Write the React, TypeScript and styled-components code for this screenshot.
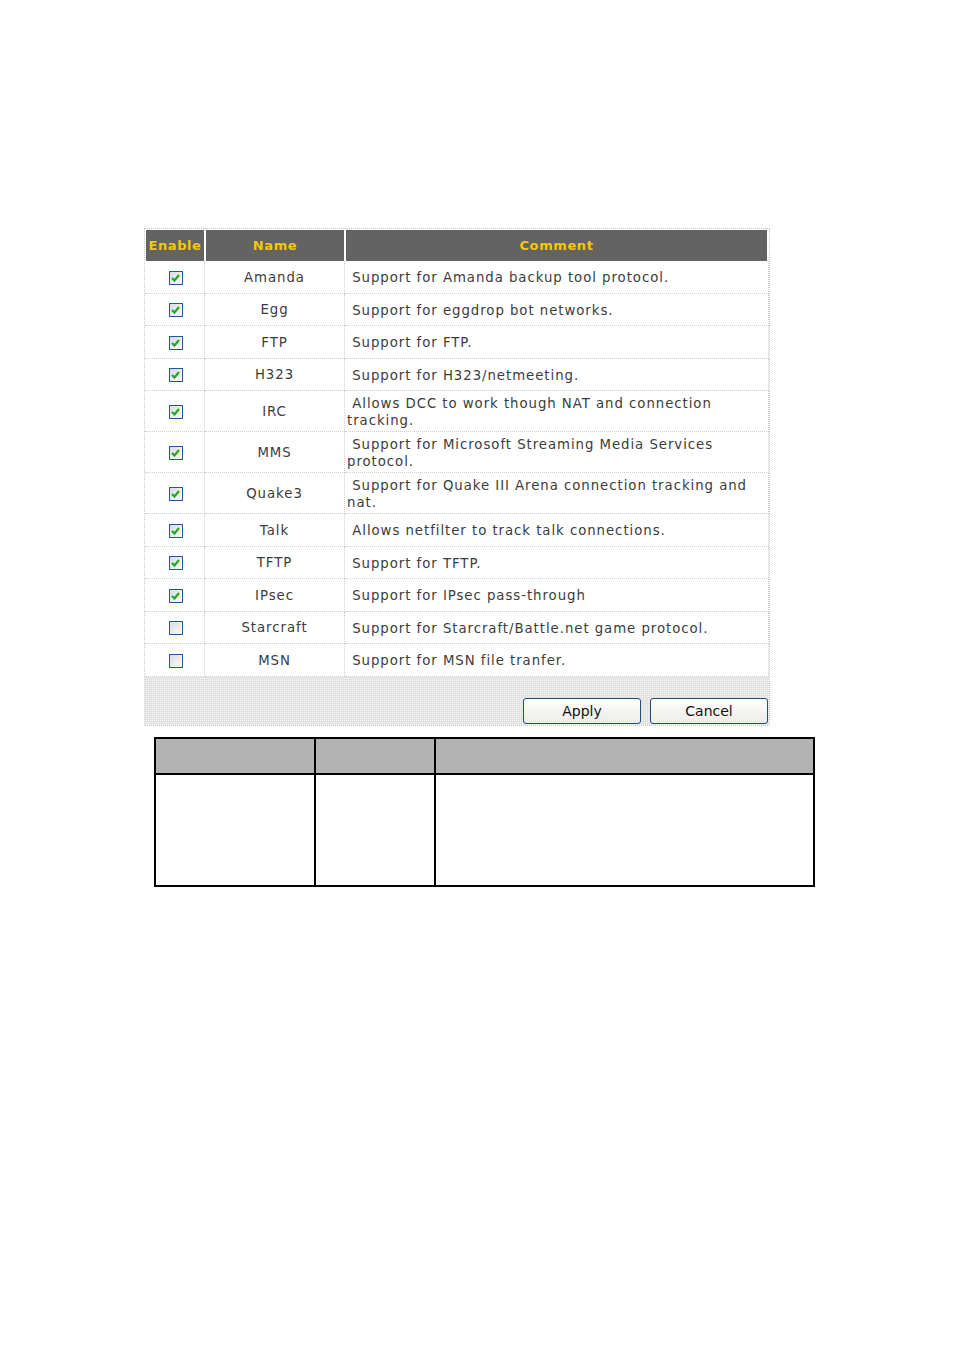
import { ReactElement } from 'react'
import styled, { createGlobalStyle } from 'styled-components'

const GlobalStyle = createGlobalStyle`
  body {
    margin: 0;
    background: #fff;
    font-family: 'DejaVu Sans', Verdana, sans-serif;
  }
`

type Alg = { name: string; comment: string; on: boolean; tall?: boolean }

const algs: Alg[] = [
  { name: 'Amanda', comment: 'Support for Amanda backup tool protocol.', on: true },
  { name: 'Egg', comment: 'Support for eggdrop bot networks.', on: true },
  { name: 'FTP', comment: 'Support for FTP.', on: true },
  { name: 'H323', comment: 'Support for H323/netmeeting.', on: true },
  { name: 'IRC', comment: 'Allows DCC to work though NAT and connection tracking.', on: true, tall: true },
  { name: 'MMS', comment: 'Support for Microsoft Streaming Media Services protocol.', on: true, tall: true },
  { name: 'Quake3', comment: 'Support for Quake III Arena connection tracking and nat.', on: true, tall: true },
  { name: 'Talk', comment: 'Allows netfilter to track talk connections.', on: true },
  { name: 'TFTP', comment: 'Support for TFTP.', on: true },
  { name: 'IPsec', comment: 'Support for IPsec pass-through', on: true },
  { name: 'Starcraft', comment: 'Support for Starcraft/Battle.net game protocol.', on: false },
  { name: 'MSN', comment: 'Support for MSN file tranfer.', on: false },
]

function CheckBox({ on }: { on: boolean }): ReactElement {
  return (
    <Box>
      {on && (
        <svg width="9" height="8" viewBox="0 0 9 8">
          <path d="M1 4 L3.5 6.5 L8 1" fill="none" stroke="#21a821" strokeWidth="2.2" />
        </svg>
      )}
    </Box>
  )
}

function App(): ReactElement {
  return (
    <Page>
      <GlobalStyle />
      <Panel>
        <AlgTable>
          <colgroup>
            <col style={{ width: 60 }} />
            <col style={{ width: 140 }} />
            <col />
          </colgroup>
          <thead>
            <tr>
              <Head>Enable</Head>
              <Head>Name</Head>
              <Head>Comment</Head>
            </tr>
          </thead>
          <tbody>
            {algs.map((a) => (
              <Row key={a.name} $tall={a.tall}>
                <Cell $center>
                  <CheckBox on={a.on} />
                </Cell>
                <Cell $center>{a.name}</Cell>
                <CommentCell>&nbsp;{a.comment}</CommentCell>
              </Row>
            ))}
          </tbody>
        </AlgTable>
        <Footer>
          <Button type="button">Apply</Button>
          <Button type="button">Cancel</Button>
        </Footer>
      </Panel>
      <BlankTable>
        <thead>
          <tr>
            <BlankHead style={{ width: 158 }} />
            <BlankHead style={{ width: 118 }} />
            <BlankHead />
          </tr>
        </thead>
        <tbody>
          <tr>
            <BlankCell />
            <BlankCell />
            <BlankCell />
          </tr>
        </tbody>
      </BlankTable>
    </Page>
  )
}

export default App

const Page = styled.div`
  padding: 228px 0 0 144px;
  min-height: 1350px;
  box-sizing: border-box;
`

const Panel = styled.div`
  width: 626px;
  box-sizing: border-box;
  border: 1px dotted #c8c8c8;
`

const AlgTable = styled.table`
  width: 100%;
  border-collapse: separate;
  border-spacing: 0;
  table-layout: fixed;
`

const Head = styled.th`
  height: 31px;
  padding: 0;
  background: #636363;
  border: 1px solid #fff;
  border-bottom: none;
  color: #f5c800;
  font-size: 13px;
  font-weight: bold;
  letter-spacing: 0.6px;
  text-align: center;
  &:last-child {
    border-right: 2px solid #fff;
  }
`

const Row = styled.tr<{ $tall?: boolean }>`
  height: ${(p) => (p.$tall ? '41px' : '32.5px')};
`

const Cell = styled.td<{ $center?: boolean }>`
  padding: 1px 2px 0;
  border-right: 1px dotted #cfcfcf;
  border-bottom: 1px dotted #cfcfcf;
  color: #3c3c3c;
  font-size: 13.3px;
  letter-spacing: 0.95px;
  line-height: 17px;
  text-align: ${(p) => (p.$center ? 'center' : 'left')};
  vertical-align: middle;
`

const CommentCell = styled(Cell)`
  padding: 2px 6px 0 2px;
`

const Box = styled.span`
  display: inline-flex;
  align-items: center;
  justify-content: center;
  width: 12px;
  height: 12px;
  margin-left: 2px;
  border: 1.5px solid #1c5a9a;
  background: linear-gradient(135deg, #dcdcd8, #fbfbfb);
  vertical-align: middle;
`

const Footer = styled.div`
  height: 48px;
  display: flex;
  justify-content: flex-end;
  align-items: flex-end;
  gap: 9px;
  padding: 0 1px 0 0;
  box-sizing: border-box;
  background-color: #f4f4f4;
  background-image: linear-gradient(#e2e2e2 1px, transparent 1px),
    linear-gradient(90deg, #e2e2e2 1px, transparent 1px);
  background-size: 2px 2px;
`

const Button = styled.button`
  width: 118px;
  height: 26px;
  margin-bottom: 1px;
  border: 1px solid #1f4f7e;
  border-radius: 3px;
  background: linear-gradient(#ffffff, #ecebe6);
  color: #111;
  font-family: 'DejaVu Sans', Verdana, sans-serif;
  font-size: 14px;
  padding: 0;
`

const BlankTable = styled.table`
  margin: 11px 0 0 10px;
  width: 661px;
  border-collapse: collapse;
  table-layout: fixed;
`

const BlankHead = styled.th`
  height: 34px;
  padding: 0;
  background: #b3b3b3;
  border: 2px solid #000;
`

const BlankCell = styled.td`
  height: 110px;
  padding: 0;
  border: 2px solid #000;
`
